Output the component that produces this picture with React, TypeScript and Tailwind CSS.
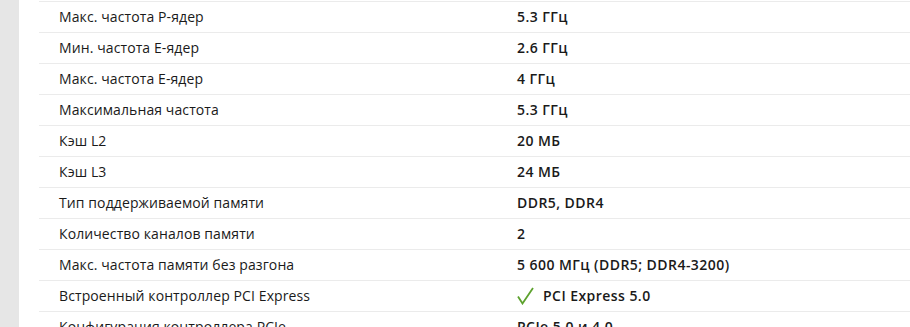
const rows: { label: string; value: string; check?: boolean }[] = [
  { label: "Макс. частота P-ядер", value: "5.3 ГГц" },
  { label: "Мин. частота E-ядер", value: "2.6 ГГц" },
  { label: "Макс. частота E-ядер", value: "4 ГГц" },
  { label: "Максимальная частота", value: "5.3 ГГц" },
  { label: "Кэш L2", value: "20 МБ" },
  { label: "Кэш L3", value: "24 МБ" },
  { label: "Тип поддерживаемой памяти", value: "DDR5, DDR4" },
  { label: "Количество каналов памяти", value: "2" },
  { label: "Макс. частота памяти без разгона", value: "5 600 МГц (DDR5; DDR4-3200)" },
  { label: "Встроенный контроллер PCI Express", value: "PCI Express 5.0", check: true },
  { label: "Конфигурация контроллера PCIe", value: "PCIe 5.0 и 4.0" },
];

export default function App() {
  return (
    <div className="flex h-[327px] w-[910px] overflow-hidden bg-white font-['Open_Sans',sans-serif] text-[14px] text-[#1a1a1a]">
      {/* Left gray strip */}
      <div className="w-[19px] shrink-0 bg-[#e6e6e6]"></div>

      {/* Spec table */}
      <div className="flex-1 pl-[20px] pt-[1px]">
        {rows.map((r) => (
          <div key={r.label} className="flex h-[31px] items-center border-t border-[#ebebeb] pb-[1px] pl-[20px]">
            <div className="w-[458px] shrink-0 tracking-[0.1px]">{r.label}</div>
            <div className="flex items-center font-semibold tracking-[0.45px]">
              {r.check && (
                <svg width="17" height="18" viewBox="0 0 17 18" className="mr-[9px]">
                  <path d="M1 9.5 L5.5 16.5 L16 1" fill="none" stroke="#5da22e" strokeWidth="1.8" />
                </svg>
              )}
              {r.value}
            </div>
          </div>
        ))}
      </div>
    </div>
  );
}
